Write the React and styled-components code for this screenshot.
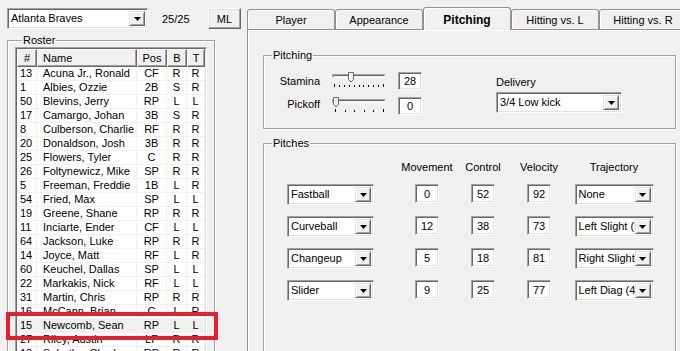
import styled, { createGlobalStyle } from "styled-components";

const GlobalStyle = createGlobalStyle`
  html, body {
    margin: 0;
    padding: 0;
    background: #f0f0f0;
  }
  body {
    font-family: "Liberation Sans", Arial, sans-serif;
    font-size: 11px;
    color: #000;
  }
  * { box-sizing: border-box; }
`;

const Window = styled.div`
  position: relative;
  width: 680px;
  height: 351px;
  overflow: hidden;
  display: flex;
  background: #f0f0f0;
`;

const LeftPane = styled.div`
  width: 247px;
  flex-shrink: 0;
  padding: 8px 0 0 7px;
`;

const TopBar = styled.div`
  display: flex;
  align-items: center;
  height: 21px;
`;

const Count = styled.span`
  margin-left: 14px;
  width: 29px;
`;

const Button = styled.div`
  margin-left: 17px;
  width: 33px;
  height: 21px;
  display: flex;
  align-items: center;
  justify-content: center;
  background: #f0f0f0;
  border: 1px solid;
  border-color: #fff #696969 #696969 #fff;
  box-shadow: inset -1px -1px 0 #a0a0a0, inset 1px 1px 0 #e3e3e3;
`;

const GroupBox = styled.fieldset`
  margin: ${(p) => p.$margin || "0"};
  padding: ${(p) => p.$padding || "0"};
  width: ${(p) => p.$width}px;
  height: ${(p) => p.$height}px;
  border: 1px solid #a0a0a0;
  box-shadow: inset 1px 1px 0 #fff, 1px 1px 0 #fff;
  min-width: 0;
`;

const Legend = styled.legend`
  padding: 0 1px;
  margin-left: ${(p) => p.$offset || 7}px;
  line-height: 13px;
`;

const ListFrame = styled.div`
  width: 192px;
  height: 320px;
  background: #fff;
  border: 1px solid;
  border-color: #a0a0a0 #fff #fff #a0a0a0;
  box-shadow: inset 1px 1px 0 #696969, inset -1px -1px 0 #e3e3e3;
  padding: 1px;
  overflow: hidden;
`;

const columns = "20px 100px 30px 20px 18px";

const HeaderRow = styled.div`
  display: grid;
  grid-template-columns: ${columns};
  height: 18px;
`;

const HeaderCell = styled.div`
  display: flex;
  align-items: center;
  justify-content: ${(p) => (p.$left ? "flex-start" : "center")};
  padding-left: ${(p) => (p.$left ? "5px" : "0")};
  background: #f0f0f0;
  border: 1px solid;
  border-color: #fff #696969 #696969 #fff;
  box-shadow: inset -1px -1px 0 #a0a0a0;
`;

const Row = styled.div`
  display: grid;
  grid-template-columns: ${columns};
  height: 14px;
  background: ${(p) => (p.$selected ? "#f0f0f0" : "#fff")};
`;

const Cell = styled.div`
  line-height: 13px;
  border-right: 1px solid #f0f0f0;
  border-bottom: 1px solid #f0f0f0;
  white-space: nowrap;
  overflow: hidden;
  text-align: ${(p) => (p.$center ? "center" : "left")};
  padding-left: ${(p) => p.$pad || 0}px;
`;

const RightPane = styled.div`
  flex: 1;
  padding-top: 7px;
  display: flex;
  flex-direction: column;
`;

const TabStrip = styled.div`
  display: flex;
  align-items: flex-end;
  height: 22px;
`;

const Tab = styled.div`
  position: relative;
  z-index: ${(p) => (p.$active ? 1 : 0)};
  flex-shrink: 0;
  width: 88px;
  height: ${(p) => (p.$active ? 23 : 20)}px;
  margin-bottom: ${(p) => (p.$active ? -1 : 0)}px;
  padding-top: ${(p) => (p.$active ? 1 : 0)}px;
  display: flex;
  align-items: center;
  justify-content: center;
  font-weight: ${(p) => (p.$active ? "bold" : "normal")};
  font-size: ${(p) => (p.$active ? 12 : 11)}px;
  background: #f0f0f0;
  border: 1px solid #919191;
  border-bottom: none;
  border-radius: 3px 3px 0 0;
  box-shadow: inset 1px 1px 0 #fff;
`;

const TabPanel = styled.div`
  flex: 1;
  border-top: 1px solid #919191;
  border-left: 1px solid #919191;
  box-shadow: inset 1px 1px 0 #fff;
  padding: 0 0 0 15px;
`;

const PitchingBody = styled.div`
  display: flex;
  padding-top: 10px;
`;

const SliderGrid = styled.div`
  display: grid;
  grid-template-columns: 56px 54px 24px;
  grid-auto-rows: 18px;
  column-gap: 12px;
  row-gap: 7px;
  align-items: center;
`;

const SliderLabel = styled.span`
  text-align: right;
  line-height: 13px;
  margin-top: ${(p) => p.$shift || 0}px;
`;

const Edit = styled.div`
  width: 24px;
  height: ${(p) => p.$height || 18}px;
  display: flex;
  align-items: center;
  justify-content: center;
  background: #fff;
  border: 1px solid;
  border-color: #a0a0a0 #fff #fff #a0a0a0;
  box-shadow: inset 1px 1px 0 #696969, inset -1px -1px 0 #e3e3e3;
  align-self: start;
`;

const DeliveryBlock = styled.div`
  margin-left: 74px;
  padding-top: 4px;
  display: flex;
  flex-direction: column;
  gap: 3px;
`;

const Caption = styled.span`
  line-height: 13px;
`;

const ComboBox = styled.div`
  width: ${(p) => p.$width}px;
  height: 21px;
  display: flex;
  background: #fff;
  border: 1px solid;
  border-color: #a0a0a0 #fff #fff #a0a0a0;
  box-shadow: inset 1px 1px 0 #696969, inset -1px -1px 0 #e3e3e3;
  padding: 2px;
`;

const ComboText = styled.div`
  flex: 1;
  min-width: 0;
  overflow: hidden;
  white-space: nowrap;
  line-height: 15px;
  padding-left: 1px;
`;

const DropButton = styled.div`
  width: 16px;
  flex-shrink: 0;
  display: flex;
  align-items: center;
  justify-content: center;
  background: #f0f0f0;
  border: 1px solid;
  border-color: #e3e3e3 #696969 #696969 #e3e3e3;
  box-shadow: inset 1px 1px 0 #fff, inset -1px -1px 0 #a0a0a0;
`;

const PitchGrid = styled.div`
  display: grid;
  grid-template-columns: 87px 25px 56px 56px 56px 94px;
  grid-template-rows: 12px;
  grid-auto-rows: 21px;
  row-gap: 11px;
  justify-items: center;
  padding: 11px 0 0 23px;
`;

const PitchLine = styled.div`
  display: contents;
`;

const HeadLabel = styled.span`
  line-height: 13px;
  align-self: start;
`;

const Highlight = styled.div`
  position: absolute;
  left: 6px;
  top: 312px;
  width: 212px;
  height: 28px;
  border: 4px solid #e2222a;
`;

const roster = [
  ["13", "Acuna Jr., Ronald", "CF", "R", "R"],
  ["1", "Albies, Ozzie", "2B", "S", "R"],
  ["50", "Blevins, Jerry", "RP", "L", "L"],
  ["17", "Camargo, Johan", "3B", "S", "R"],
  ["8", "Culberson, Charlie", "RF", "R", "R"],
  ["20", "Donaldson, Josh", "3B", "R", "R"],
  ["25", "Flowers, Tyler", "C", "R", "R"],
  ["26", "Foltynewicz, Mike", "SP", "R", "R"],
  ["5", "Freeman, Freddie", "1B", "L", "R"],
  ["54", "Fried, Max", "SP", "L", "L"],
  ["19", "Greene, Shane", "RP", "R", "R"],
  ["11", "Inciarte, Ender", "CF", "L", "L"],
  ["64", "Jackson, Luke", "RP", "R", "R"],
  ["14", "Joyce, Matt", "RF", "L", "R"],
  ["60", "Keuchel, Dallas", "SP", "L", "L"],
  ["22", "Markakis, Nick", "RF", "L", "L"],
  ["31", "Martin, Chris", "RP", "R", "R"],
  ["16", "McCann, Brian", "C", "L", "R"],
  ["15", "Newcomb, Sean", "RP", "L", "L"],
  ["27", "Riley, Austin", "LF", "R", "R"],
  ["18", "Sobotka, Chad", "RP", "R", "R"],
];

const pitches = [
  ["Fastball", "0", "52", "92", "None"],
  ["Curveball", "12", "38", "73", "Left Slight (5-7)"],
  ["Changeup", "5", "18", "81", "Right Slight (5-7)"],
  ["Slider", "9", "25", "77", "Left Diag (4-8)"],
];

const tabs = ["Player", "Appearance", "Pitching", "Hitting vs. L", "Hitting vs. R"];

const Arrow = () => (
  <svg width="7" height="4" viewBox="0 0 7 4">
    <path d="M0 0H7L3.5 4Z" fill="#000" />
  </svg>
);

const Combo = ({ width, children }) => (
  <ComboBox $width={width}>
    <ComboText>{children}</ComboText>
    <DropButton>
      <Arrow />
    </DropButton>
  </ComboBox>
);

const Slider = ({ thumb, ticks }) => (
  <svg width="54" height="18" viewBox="0 0 54 18" style={{ alignSelf: "start" }}>
    <path d="M0.5 5.5V2.5H53.5" stroke="#a0a0a0" fill="none" />
    <path d="M1.5 4.5V3.5H52.5" stroke="#696969" fill="none" />
    <path d="M0.5 5.5H53.5V2.5" stroke="#fff" fill="none" />
    <path
      d={`M${thumb - 2.5} 0.5H${thumb + 2.5}V7.5L${thumb} 10L${thumb - 2.5} 7.5Z`}
      fill="#f0f0f0"
      stroke="#696969"
    />
    <path d={`M${thumb - 1.5} 7V1.5H${thumb + 1.5}`} stroke="#fff" fill="none" />
    {ticks.map((t, i) => (
      <line
        key={i}
        x1={t + 0.5}
        x2={t + 0.5}
        y1={i === 0 || i === ticks.length - 1 ? 12 : 13}
        y2="15"
        stroke="#000"
      />
    ))}
  </svg>
);

const range = (n, a, b) => Array.from({ length: n }, (_, i) => Math.round(a + ((b - a) * i) / (n - 1)));

export default function App() {
  return (
    <>
      <GlobalStyle />
      <Window>
        <LeftPane>
          <TopBar>
            <Combo width={141}>Atlanta Braves</Combo>
            <Count>25/25</Count>
            <Button>ML</Button>
          </TopBar>
          <GroupBox $width={208} $height={400} $margin="5px 0 0 0" $padding="0 7px">
            <Legend>Roster</Legend>
            <ListFrame>
              <HeaderRow>
                <HeaderCell>#</HeaderCell>
                <HeaderCell $left>Name</HeaderCell>
                <HeaderCell>Pos</HeaderCell>
                <HeaderCell>B</HeaderCell>
                <HeaderCell>T</HeaderCell>
              </HeaderRow>
              {roster.map(([num, name, pos, b, t]) => (
                <Row key={name} $selected={name === "Newcomb, Sean"}>
                  <Cell $pad={3}>{num}</Cell>
                  <Cell $pad={6}>{name}</Cell>
                  <Cell $center>{pos}</Cell>
                  <Cell $center>{b}</Cell>
                  <Cell $center>{t}</Cell>
                </Row>
              ))}
            </ListFrame>
          </GroupBox>
        </LeftPane>
        <RightPane>
          <TabStrip>
            {tabs.map((t) => (
              <Tab key={t} $active={t === "Pitching"}>
                {t}
              </Tab>
            ))}
          </TabStrip>
          <TabPanel>
            <GroupBox $width={413} $height={80} $margin="19px 0 0 0">
              <Legend $offset={8}>Pitching</Legend>
              <PitchingBody>
                <SliderGrid>
                  <SliderLabel>Stamina</SliderLabel>
                  <Slider thumb={19} ticks={range(11, 2, 51)} />
                  <Edit>28</Edit>
                  <SliderLabel $shift={-4}>Pickoff</SliderLabel>
                  <Slider thumb={4} ticks={range(6, 3, 51)} />
                  <Edit>0</Edit>
                </SliderGrid>
                <DeliveryBlock>
                  <Caption>Delivery</Caption>
                  <Combo width={126}>3/4 Low kick</Combo>
                </DeliveryBlock>
              </PitchingBody>
            </GroupBox>
            <GroupBox $width={413} $height={300} $margin="8px 0 0 0">
              <Legend $offset={8}>Pitches</Legend>
              <PitchGrid>
                <PitchLine>
                  <span />
                  <span />
                  <HeadLabel>Movement</HeadLabel>
                  <HeadLabel>Control</HeadLabel>
                  <HeadLabel>Velocity</HeadLabel>
                  <HeadLabel>Trajectory</HeadLabel>
                </PitchLine>
                {pitches.map(([name, mov, ctl, vel, traj]) => (
                  <PitchLine key={name}>
                    <Combo width={87}>{name}</Combo>
                    <span />
                    <Edit $height={19}>{mov}</Edit>
                    <Edit $height={19}>{ctl}</Edit>
                    <Edit $height={19}>{vel}</Edit>
                    <Combo width={79}>{traj}</Combo>
                  </PitchLine>
                ))}
              </PitchGrid>
            </GroupBox>
          </TabPanel>
        </RightPane>
        <Highlight />
      </Window>
    </>
  );
}
